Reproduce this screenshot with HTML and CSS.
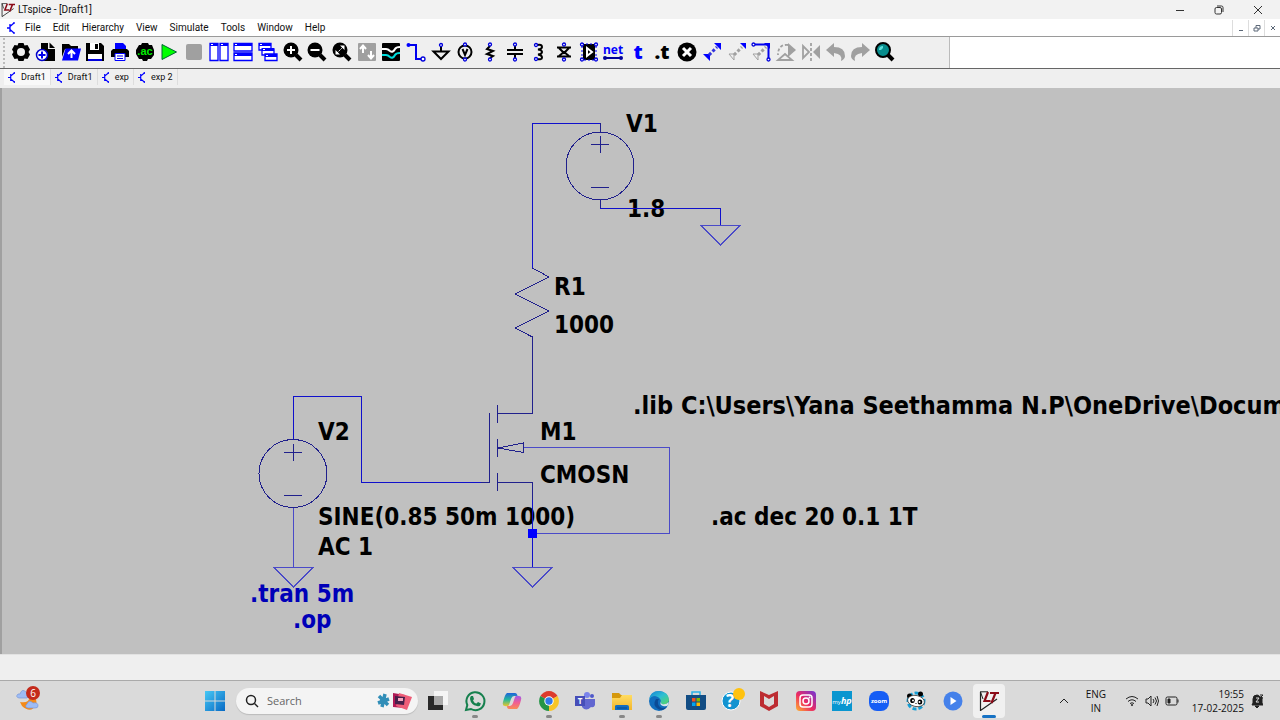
FILE: index.html
```html
<!DOCTYPE html>
<html lang="en">
<head>
<meta charset="utf-8">
<title>LTspice - [Draft1]</title>
<link rel="stylesheet" href="styles.css">
</head>
<body>
<svg class="defs" aria-hidden="true">
  <defs>
    <symbol id="doc" viewBox="0 0 10 12"><path d="M0 6H3M3 2V10M3 4.500L7 1M3 7.500L7 11M7 0V2M7 10V12" fill="none" stroke="#00f" stroke-width="1.300"/></symbol>
    <symbol id="lt" viewBox="0 0 20 20"><path d="M1.500 1V19.500L18 8" fill="none" stroke="#222" stroke-width="1.200"/><path d="M1 .8H9M1.500 1L4 8" fill="none" stroke="#222"/><path d="M9 1L5.500 10H11.500M11 2H20M16.500 2L12.500 12" fill="none" stroke="#8b0b18" stroke-width="2.200"/></symbol>
    <linearGradient id="gWin" x2="1" y2="1"><stop stop-color="#45c8f5"/><stop offset="1" stop-color="#0869c4"/></linearGradient>
    <linearGradient id="gIg" x1="0" y1="1" x2="1" y2="0"><stop stop-color="#ffb52e"/><stop offset=".45" stop-color="#ec2b62"/><stop offset="1" stop-color="#7036d8"/></linearGradient>
    <linearGradient id="gEdge" x2="1" y2="1"><stop stop-color="#1480d4"/><stop offset=".5" stop-color="#2ebfd3"/><stop offset="1" stop-color="#58d85c"/></linearGradient>
    <linearGradient id="gCopA" x2="0" y2="1"><stop stop-color="#1e63dc"/><stop offset=".5" stop-color="#25b99a"/><stop offset="1" stop-color="#f3c529"/></linearGradient>
    <linearGradient id="gCopB" x2="0" y2="1"><stop stop-color="#9f5bec"/><stop offset=".5" stop-color="#ef5c96"/><stop offset="1" stop-color="#fa8b54"/></linearGradient>
    <linearGradient id="gFold" x2="0" y2="1"><stop stop-color="#ffdc62"/><stop offset="1" stop-color="#f3b62b"/></linearGradient>
  </defs>
</svg>

<header class="titlebar">
  <svg class="app-icon"><use href="#lt"/></svg>
  <h1 class="title">LTspice - [Draft1]</h1>
  <div class="window-controls">
    <button aria-label="Minimize"><svg viewBox="0 0 10 10"><path d="M1 5.500H9"/></svg></button>
    <button aria-label="Restore"><svg viewBox="0 0 10 10"><rect x="1" y="2.500" width="6.500" height="6.500" rx="1.500"/><path d="M3 1H7.500Q9 1 9 2.500V7"/></svg></button>
    <button aria-label="Close"><svg viewBox="0 0 10 10"><path d="M1 1L9 9M9 1L1 9"/></svg></button>
  </div>
</header>

<nav class="menubar">
  <svg class="doc-icon"><use href="#doc"/></svg>
  <button>File</button><button>Edit</button><button>Hierarchy</button><button>View</button><button>Simulate</button><button>Tools</button><button>Window</button><button>Help</button>
  <div class="mdi">
    <button aria-label="Minimize document"><svg viewBox="0 0 8 8"><path d="M2 6.500H6"/></svg></button>
    <button aria-label="Restore document"><svg viewBox="0 0 8 8"><path d="M1 4H5V7H1ZM3 4V1.500H7V5H5"/></svg></button>
    <button aria-label="Close document"><svg viewBox="0 0 8 8"><path d="M2 2L6 6M6 2L2 6"/></svg></button>
  </div>
</nav>

<div class="toolbar">
  <div class="tools">
    <button aria-label="Settings"><svg viewBox="0 0 20 20"><path fill-rule="evenodd" d="M7.500 1H12.500L13.500 3.500L16.500 3L19 7.500L17.500 10L19 12.500L16.500 17L13.500 16.500L12.500 19H7.500L6.500 16.500L3.500 17L1 12.500L2.500 10L1 7.500L3.500 3L6.500 3.500ZM10 6A4 4 0 1 0 10 14A4 4 0 1 0 10 6"/></svg></button>
    <button aria-label="New schematic"><svg viewBox="0 0 20 20"><path d="M5 1H12V7H19V19H5Z"/><path d="M13.500 .5L19 6H13.500Z"/><circle cx="6" cy="13" r="5.500" fill="#fff" stroke="#00c" stroke-width="1.500"/><path class="b3" d="M6 9.500V16.500M2.500 13H9.500"/></svg></button>
    <button aria-label="Open"><svg viewBox="0 0 20 20"><path d="M1 2H8L10 4H17V7H4L1 15Z"/><path fill="#00f" d="M4.500 6.500H20L17 18.500H1Z"/><path class="w2" d="M10.500 16V9M7 12L10.500 8.500L14 12"/></svg></button>
    <button aria-label="Save"><svg viewBox="0 0 20 20"><path d="M1 1H16L19 4V19H1Z"/><path fill="#fff" d="M5 1H14V8H5ZM3 12H17V19H3Z"/><path d="M10 2H13V7H10Z"/><path fill="#00d" d="M3 17H17V19H3Z"/></svg></button>
    <button aria-label="Print"><svg viewBox="0 0 20 20"><path fill="#00f" d="M5 1H13L16 4V8H5Z"/><path d="M3 7H17L19 9V15H1V9Z"/><path fill="#fff" stroke="#00f" d="M5 11.500H15V18.500H5Z"/><path class="b" d="M7 14H13M7 16.500H13"/></svg></button>
    <button aria-label="AC analysis"><svg viewBox="0 0 20 20"><path d="M7 1H13L14 3H17L19 8V13L16 17H13L12 19H8L7 17H4L1 12V8L4 3H6Z"/><text class="ac" x="10" y="13" text-anchor="middle">.ac</text></svg></button>
    <button aria-label="Run"><svg viewBox="0 0 20 20"><path fill="#0f0" stroke="#063" d="M3 2.500L17.500 10L3 17.500Z"/></svg></button>
    <button aria-label="Stop" disabled><svg viewBox="0 0 20 20"><rect x="2" y="2" width="16" height="16" rx="2" fill="#a0a0a0"/></svg></button>
    <button aria-label="Tile vertically"><svg viewBox="0 0 20 20"><path class="wb" d="M1 1.500H9V18.500H1ZM11 1.500H19V18.500H11Z"/><path fill="#00f" d="M1 1H9V4H1ZM11 1H19V4H11Z"/><path fill="#fff" d="M2 2H4V3H2ZM12 2H14V3H12Z"/></svg></button>
    <button aria-label="Tile horizontally"><svg viewBox="0 0 20 20"><path class="wb" d="M1 1.500H19V9H1ZM1 11H19V18.500H1Z"/><path fill="#00f" d="M1 1H19V4H1ZM1 11H19V14H1Z"/><path fill="#fff" d="M2 2H4V3H2ZM2 12H4V13H2Z"/></svg></button>
    <button aria-label="Cascade"><svg viewBox="0 0 20 20"><path class="wb" d="M1 1.500H13V8H1Z"/><path class="wb" d="M4 7H16V13H4Z"/><path class="wb" d="M7 12H19V18.500H7Z"/><path fill="#00f" d="M1 1H13V4H1ZM4 6H16V9H4ZM7 12H19V15H7Z"/><path fill="#fff" d="M2 2H4V3H2ZM5 7H7V8H5ZM8 13H10V14H8Z"/></svg></button>
    <button aria-label="Zoom in"><svg viewBox="0 0 20 20"><circle cx="8" cy="8" r="7.500"/><path class="k4" d="M13 13L18 18"/><path class="w2" d="M4 8H12M8 4V12"/></svg></button>
    <button aria-label="Zoom out"><svg viewBox="0 0 20 20"><circle cx="8" cy="8" r="7.500"/><path class="k4" d="M13 13L18 18"/><path class="w2" d="M3.500 8H12.500"/></svg></button>
    <button aria-label="Zoom to fit"><svg viewBox="0 0 20 20"><circle cx="8" cy="8" r="7.500"/><path class="k4" d="M13 13L18 18"/><path fill="#fff" d="M8 3.500H12.500V8ZM3.500 8L8 12.500H3.500Z"/><path stroke="#fff" stroke-dasharray="2 1" d="M5 11L11 5"/></svg></button>
    <button aria-label="Autorange" disabled><svg viewBox="0 0 20 20"><rect x="1" y="1" width="18" height="18" rx="1" fill="#a0a0a0"/><path class="w2" d="M6 11V4M3 7L6 3.500L9 7M14 9V16M11 13L14 16.500L17 13"/></svg></button>
    <button aria-label="Waveforms"><svg viewBox="0 0 20 20"><rect x="1" y="1" width="18" height="18" rx="1"/><path class="w2" d="M1 7H5Q7 7 9 9Q12 11 14 7Q15 5 19 5"/><path fill="none" stroke="#0dd" stroke-width="2" d="M1 13H5Q7 13 9 15Q12 17 14 13Q15 11 19 11"/></svg></button>
    <button aria-label="Wire"><svg viewBox="0 0 20 20"><path class="b" stroke-width="2" d="M2 3H10V17H16"/><circle cx="2.500" cy="3" r="2" fill="#00f"/><circle class="pin" cx="17" cy="17" r="2"/></svg></button>
    <button aria-label="Ground"><svg viewBox="0 0 20 20"><path class="k2" d="M10 5V9M2.500 9.500H17.500L10 17Z"/><circle class="pin" cx="10" cy="3" r="1.500"/></svg></button>
    <button aria-label="Voltage source"><svg viewBox="0 0 20 20"><circle class="k2" cx="10" cy="10" r="6.500"/><path class="k2" d="M7.500 7L10 13L12.500 7"/><circle class="pin" cx="10" cy="2.500" r="1.500"/><circle class="pin" cx="10" cy="17.500" r="1.500"/></svg></button>
    <button aria-label="Resistor"><svg viewBox="0 0 20 20"><path class="k2" d="M10 4L7 7L13 9L7 12L13 14L10 16"/><circle class="pin" cx="10" cy="2.500" r="1.500"/><circle class="pin" cx="10" cy="17.500" r="1.500"/></svg></button>
    <button aria-label="Capacitor"><svg viewBox="0 0 20 20"><path class="k2" d="M2 8H18M2 12H18M10 4V8M10 12V16"/><circle class="pin" cx="10" cy="2.500" r="1.500"/><circle class="pin" cx="10" cy="17.500" r="1.500"/></svg></button>
    <button aria-label="Inductor"><svg viewBox="0 0 20 20"><path class="k2" d="M8 3Q13 2 13 5Q13 7 9 7.500Q13 8 13 10Q13 12 9 12.500Q13 13 13 15.500Q13 18 8 17"/><circle class="pin" cx="7" cy="3" r="1.500"/><circle class="pin" cx="7" cy="17" r="1.500"/></svg></button>
    <button aria-label="Diode"><svg viewBox="0 0 20 20"><path class="k2" d="M3 5.500H17M5 6L10 11L15 6M3 14.500H17M5 14L10 10L15 14"/><circle class="pin" cx="10" cy="2.500" r="1.500"/><circle class="pin" cx="10" cy="17.500" r="1.500"/></svg></button>
    <button aria-label="Component"><svg viewBox="0 0 20 20"><rect x="4" y="2" width="12" height="16"/><path class="w2" d="M8 6L13 10L8 14Z"/><path class="b" stroke-dasharray="2 2" d="M3 2H17V18H3Z"/><g class="pin"><circle cx="3" cy="2.500" r="1.500"/><circle cx="17" cy="2.500" r="1.500"/><circle cx="3" cy="17.500" r="1.500"/><circle cx="17" cy="17.500" r="1.500"/></g></svg></button>
    <button aria-label="Net name"><svg viewBox="0 0 20 20"><text class="net" x="10" y="12" text-anchor="middle">net</text><g fill="#009"><path stroke="#009" stroke-width="2" d="M2 16H18"/><circle cx="2" cy="16" r="2"/><circle cx="18" cy="16" r="2"/></g></svg></button>
    <button aria-label="Text"><svg viewBox="0 0 20 20"><text class="tt blue" x="10" y="17" text-anchor="middle">t</text></svg></button>
    <button aria-label="SPICE directive"><svg viewBox="0 0 20 20"><text class="tt" x="9" y="17" text-anchor="middle">.t</text></svg></button>
    <button aria-label="Delete"><svg viewBox="0 0 20 20"><circle cx="10" cy="10" r="9.500"/><path class="w3" d="M6 6L14 14M14 6L6 14"/></svg></button>
    <button aria-label="Move"><svg viewBox="0 0 20 20"><path fill="#00f" d="M12 1H19V8ZM1 12H8V19Z"/><path class="dash blue-line" d="M7 13L15 5"/></svg></button>
    <button aria-label="Copy"><svg viewBox="0 0 20 20"><path fill="#00f" d="M13 1H19V7Z"/><path class="g" d="M2 12H7V18Z"/><path class="g dash" d="M7 13L15 5"/></svg></button>
    <button aria-label="Drag"><svg viewBox="0 0 20 20"><path fill="#00f" d="M13 1H19V7Z"/><path class="b" stroke-width="2" d="M4 2.500H17.500V16"/><path class="g" d="M2 12H7V18Z"/><path class="g dash" d="M7 13L15 5"/><circle class="pin" cx="2.500" cy="2.500" r="1.500"/><circle class="pin" cx="17.500" cy="17.500" r="1.500"/></svg></button>
    <button aria-label="Rotate" disabled><svg viewBox="0 0 20 20"><path fill="#a0a0a0" d="M12 1L20 8L12 15Z"/><path class="g2" stroke-dasharray="3 2" d="M12 3Q2 2 2 13"/><path class="g2" d="M2 18H16L9 12Z"/></svg></button>
    <button aria-label="Mirror" disabled><svg viewBox="0 0 20 20"><path fill="#a0a0a0" d="M19 3V17L12 10Z"/><path class="g2" d="M2 4V16L8 10Z"/><path class="g2" stroke-dasharray="3 2" d="M10 1V19"/></svg></button>
    <button aria-label="Undo" disabled><svg viewBox="0 0 20 20"><path fill="#a0a0a0" d="M0 8L8 1V5Q19 5 19 14Q19 17 15 19Q17 12 8 11V15Z"/></svg></button>
    <button aria-label="Redo" disabled><svg viewBox="0 0 20 20"><path fill="#a0a0a0" d="M20 8L12 1V5Q1 5 1 14Q1 17 5 19Q3 12 12 11V15Z"/></svg></button>
    <button aria-label="Find"><svg viewBox="0 0 20 20"><path class="k4" d="M13 13L18 18"/><circle cx="8" cy="8" r="7" fill="#078c8c" stroke="#000" stroke-width="2"/><path fill="#5de0dc" d="M4 8Q4 4 8 4V6L6 8Z"/></svg></button>
  </div>
</div>

<nav class="tabs">
  <button class="tab active"><svg class="doc-icon"><use href="#doc"/></svg>Draft1</button>
  <button class="tab"><svg class="doc-icon"><use href="#doc"/></svg>Draft1</button>
  <button class="tab"><svg class="doc-icon"><use href="#doc"/></svg>exp</button>
  <button class="tab"><svg class="doc-icon"><use href="#doc"/></svg>exp 2</button>
</nav>

<main class="canvas">
  <svg class="schematic" role="img" aria-label="Schematic">
    <g transform="translate(-2 -88)">
      <g class="label">
        <text x="626" y="132">V1</text><text x="627" y="217">1.8</text>
        <text x="554" y="295">R1</text><text x="554" y="333">1000</text>
        <text x="318" y="440">V2</text><text x="540" y="440">M1</text><text x="540" y="483">CMOSN</text>
        <text x="318" y="525">SINE(0.85 50m 1000)</text><text x="318" y="555">AC 1</text>
        <text class="library" x="633" y="414">.lib C:\Users\Yana Seethamma N.P\OneDrive\Docum</text>
        <text x="711" y="525">.ac dec 20 0.1 1T</text>
        <text class="probe" x="250" y="602">.tran 5m</text><text class="probe" x="293" y="628">.op</text>
      </g>
      <g class="wire">
        <path d="M532.500 268V123.500H600.500V131M600.500 200V208.500H720.500V225M293.500 439V396.500H361.500V482.500H489M532.500 388V413M532.500 483V568"/>
        <path class="thin" d="M532.500 533.500H669.500V447.500H524M293.500 508V568M701 225.500H740L720.500 245ZM274 567.500H313L293.500 587ZM513 567.500H552L532.500 587Z"/>
      </g>
      <g class="part">
        <circle cx="600" cy="166" r="34"/><circle cx="293" cy="473.500" r="34"/>
        <path d="M600.500 123V132M600.500 200V208M591 144.500H609M600.500 136V153M591 187.500H609M284 452.500H302M293.500 444V461M284 495.500H302"/>
        <path d="M532.500 268L549 277L515 294L549 311L515 328L532.500 337V413.500H498M489.500 413V482.500H481M497.500 405V423M497.500 439V457M497.500 473V491M498 482.500H532.500V500M498 448L523.500 443V452.500Z"/>
      </g>
      <rect x="528" y="529" width="9" height="9" fill="#00f"/>
    </g>
  </svg>
</main>

<div class="statusbar"></div>

<footer class="taskbar">
  <div class="widgets">
    <button aria-label="Weather"><svg viewBox="0 0 26 26"><path fill="#f58a18" d="M4 16Q13 18 15 9Q22 12 20 19Q15 28 6 20Z"/><path fill="#9ebcf5" stroke="#7898d8" stroke-width=".7" d="M3 12Q-1 11 2 8Q3 8 4 8Q6 2 10 6Q15 9 11 12ZM12 22Q8 21 11 18Q13 13 17 17Q22 16 22 20Q22 22 19 22Z"/><circle cx="17" cy="7" r="7" fill="#c42b1c"/><text class="badge" x="17" y="11" text-anchor="middle">6</text></svg></button>
  </div>
  <button class="start" aria-label="Start"><svg viewBox="0 0 20 20"><path fill="url(#gWin)" d="M0 0H9.500V9.500H0ZM10.500 0H20V9.500H10.500ZM0 10.500H9.500V20H0ZM10.500 10.500H20V20H10.500Z"/></svg></button>
  <div class="search">
    <svg class="lens" viewBox="0 0 14 14"><circle cx="6" cy="6" r="4.500"/><path d="M9.500 9.500L13 13"/></svg>
    <input type="text" placeholder="Search" aria-label="Search">
    <svg class="promo" viewBox="0 0 36 20"><path fill="none" stroke="#318eb8" stroke-width="3.500" d="M3 5L12 14M9 3L6 16M2 12L13 8"/><circle cx="7.500" cy="9.500" r="3.500" fill="#318eb8"/><path fill="#b01955" d="M17 2L29 4L28 17L17 16Z"/><path fill="#ee5d78" d="M23 2L36 6L31 19L20 15Z"/><path fill="#46204b" d="M19 5L29 6L28 14L19 13Z"/><path fill="#f7a6bd" d="M22 7H27V10H22Z"/></svg>
  </div>
  <div class="apps">
    <button aria-label="Task view"><svg viewBox="0 0 20 20"><path fill="#292929" d="M0 5H15V19H0Z"/><path fill="#f5f5f5" d="M6 0H20V14H6Z"/><path fill="#aaa" d="M6 5H15V14H6Z"/></svg></button>
    <button class="running" aria-label="WhatsApp"><svg viewBox="0 0 20 20"><path fill="none" stroke="#16804e" stroke-width="2" d="M1 19L2.300 14A9 9 0 1 1 6 18Z"/><path fill="#16804e" d="M6 5L8 5L9 8L8 9.500Q9 12 11.500 12.500L13 11L16 12.500Q15 16 12 15Q6 14 5 8Q5 6 6 5Z"/></svg></button>
    <button aria-label="Copilot"><svg viewBox="0 0 20 20"><path fill="url(#gCopA)" d="M5 2H13Q15 2 15.500 5H12Q10 5 9 8L7 14Q6 16 3 15Q0 15 1 11Q3 3 5 2Z"/><path fill="url(#gCopB)" d="M15 18H7Q5 18 5 15H8Q10 15 11 12L13 6Q14 4 17 5Q20 5 19 9Q17 17 15 18Z"/></svg></button>
    <button class="running" aria-label="Chrome"><svg viewBox="0 0 20 20"><path fill="#dd3b2c" d="M10 10L1.400 5A10 10 0 0 1 18.600 5Z"/><path fill="#f8c525" d="M10 10L18.600 5A10 10 0 0 1 10 20Z"/><path fill="#249547" d="M10 10V20A10 10 0 0 1 1.400 5Z"/><circle cx="10" cy="10" r="4.700" fill="#fff"/><circle cx="10" cy="10" r="3.700" fill="#3179e8"/></svg></button>
    <button aria-label="Teams"><svg viewBox="0 0 20 20"><circle cx="12" cy="4" r="3" fill="#7b83eb"/><circle cx="17" cy="5" r="2" fill="#5059c9"/><path fill="#6267d0" d="M7 8H20V14Q19 17 16 16Q11 21 7 16Z"/><path fill="#464eb8" d="M0 5H10V15H0Z"/><text class="team" x="5" y="13" text-anchor="middle">T</text></svg></button>
    <button class="running" aria-label="File Explorer"><svg viewBox="0 0 20 20"><path fill="#d5980d" d="M0 2H7L9 4H20V10H0Z"/><path fill="url(#gFold)" d="M0 7H8L10 4H20V19H0Z"/><path fill="#126dc0" d="M3 19V15Q3 14 5 14H15Q17 14 17 16V19Z"/><path stroke="#094b8c" d="M5 17H15"/></svg></button>
    <button class="running" aria-label="Edge"><svg viewBox="0 0 20 20"><circle cx="10" cy="10" r="10" fill="#116dbd"/><path fill="url(#gEdge)" d="M0 9Q1 0 10 0Q20 1 20 9Q19 14 13 13Q11 12 12 10Q11 6 6 5Q2 5 0 9Z"/><path fill="#d7e6e6" d="M12 10Q10 14 14 15Q17 16 19.500 14L19.500 11Q17 14 13 13Q11 12 12 10Z"/><path fill="#0b4b96" d="M7 8Q3 14 9 18Q14 21 18 16Q11 19 9 13Q8 10 10 8Z"/></svg></button>
    <button aria-label="Microsoft Store"><svg viewBox="0 0 20 20"><path fill="none" stroke="#2ab1e8" stroke-width="1.500" d="M6 5V1H14V5"/><path fill="#124d84" d="M0 4H20V17Q20 19 18 19H2Q0 19 0 17Z"/><path fill="#f25022" d="M6 7H9.500V10.500H6Z"/><path fill="#7fba00" d="M10.500 7H14V10.500H10.500Z"/><path fill="#00a4ef" d="M6 11.500H9.500V15H6Z"/><path fill="#ffb900" d="M10.500 11.500H14V15H10.500Z"/></svg></button>
    <button aria-label="Get Help"><svg viewBox="0 0 20 20"><circle cx="9" cy="10" r="9" fill="#1393d0" stroke="#fff"/><text class="help" x="8" y="16" text-anchor="middle">?</text><circle cx="17" cy="3" r="6" fill="#ffc20e"/></svg></button>
    <button aria-label="McAfee"><svg viewBox="0 0 20 20"><path fill="#bd2c32" fill-rule="evenodd" d="M1 0L10 4L19 0V15L10 20L1 15ZM5 5V13L10 16L15 13V5L10 8Z"/></svg></button>
    <button aria-label="Instagram"><svg viewBox="0 0 20 20"><rect width="20" height="20" rx="4" fill="url(#gIg)"/><rect x="4" y="4" width="12" height="12" rx="3" fill="none" stroke="#fff" stroke-width="1.500"/><circle cx="10" cy="10" r="3" fill="none" stroke="#fff" stroke-width="1.500"/><circle cx="13.500" cy="6.500" r="1" fill="#fff"/></svg></button>
    <button aria-label="myHP"><svg viewBox="0 0 20 20"><path fill="#0996d0" d="M0 0H20V20H0Z"/><text class="hp" x="10" y="13" text-anchor="middle">my<tspan class="hp-logo">hp</tspan></text></svg></button>
    <button aria-label="Zoom"><svg viewBox="0 0 20 20"><rect width="20" height="20" rx="8" fill="#155df5"/><text class="zoom" x="10" y="12" text-anchor="middle">zoom</text></svg></button>
    <button aria-label="Panda"><svg viewBox="0 0 20 20"><circle cx="10" cy="10" r="8" fill="none" stroke="#169ed5" stroke-width="3" stroke-dasharray="4 2"/><circle cx="3.500" cy="5" r="2.500"/><circle cx="14.500" cy="3" r="2.500"/><ellipse cx="10" cy="10" rx="8.500" ry="5.500" fill="#fff" stroke="#222" stroke-width=".7" transform="rotate(12 10 10)"/><ellipse cx="6.500" cy="9.500" rx="2.300" ry="2.600"/><ellipse cx="14" cy="11" rx="2.300" ry="2.600"/><circle cx="7" cy="9.500" r="1" fill="#fff"/><circle cx="13.500" cy="11" r="1" fill="#fff"/><path d="M9 12H11L10 13Z"/></svg></button>
    <button aria-label="Media player"><svg viewBox="0 0 20 20"><circle cx="10" cy="10" r="9.500" fill="#4581ea"/><path fill="#fff" d="M7.500 6L13.500 10L7.500 14Z"/></svg></button>
    <button class="current" aria-label="LTspice"><svg><use href="#lt"/></svg></button>
  </div>
  <div class="tray">
    <button class="chevron" aria-label="Show hidden icons"><svg viewBox="0 0 10 10"><path d="M1 7L5 3L9 7"/></svg></button>
    <button class="lang">ENG<br>IN</button>
    <button class="status" aria-label="Network, volume and battery">
      <svg viewBox="0 0 14 14"><path d="M1 5Q7 0 13 5M3 7.500Q7 4 11 7.500M5 9.500Q7 8 9 9.500"/><circle cx="7" cy="11" r=".7"/></svg>
      <svg viewBox="0 0 14 14"><path d="M1 5H3L6 2V12L3 9H1ZM8 5Q10 7 8 9M10 3.500Q13 7 10 10.500M12 2Q15 7 12 12"/></svg>
      <svg viewBox="0 0 14 14"><rect x="1" y="3" width="11" height="8" rx="1.500"/><path d="M13 5.500V8.500"/><path fill="#222" d="M3 5H5V9H3Z"/></svg>
    </button>
    <button class="clock">19:55<br>17-02-2025</button>
    <button class="bell" aria-label="Notifications"><svg viewBox="0 0 12 14"><path fill="#202020" d="M1 11L2 9V5Q2 1 6 1Q8 1 9 3L11 3V9L12 11ZM4 12H8L6 14Z"/><path d="M5 4H8L5 8H8" stroke="#ddd"/><path d="M9 1H12L9 4H12"/></svg></button>
  </div>
</footer>
</body>
</html>
```

FILE: styles.css
```css
* { box-sizing: border-box; }

body {
  display: flex;
  flex-direction: column;
  height: 100vh;
  margin: 0;
  overflow: hidden;
  background: #efefef;
  color: #111;
  font: 10px/14px "Open Sans", "Noto Sans", sans-serif;
}

button {
  padding: 0;
  border: 0;
  background: none;
  color: inherit;
  font: inherit;
}

svg { display: block; flex: none; }
.defs { position: absolute; width: 0; height: 0; }

/* Window frame */
.titlebar, .menubar, .tabs { font-family: Roboto, "Open Sans", sans-serif; }
.titlebar {
  display: flex;
  align-items: center;
  height: 19px;
  flex: none;
  padding: 0 3px 0 1px;
  background: #f2f2f2;
}
.app-icon { width: 14px; height: 14px; }
.title { margin: 0 0 0 3px; font-size: 10px; font-weight: 400; }
.window-controls { display: flex; margin-left: auto; }
.window-controls button { display: grid; place-items: center; width: 39px; height: 19px; }
.window-controls svg { width: 10px; height: 10px; fill: none; stroke: #333; }

.menubar {
  display: flex;
  align-items: center;
  height: 18px;
  flex: none;
  padding-left: 7px;
  border-bottom: 1px solid #9a9a9a;
  background: #fff;
}
.menubar > button { padding: 0 6px; }
.doc-icon { width: 10px; height: 12px; }
.menubar > .doc-icon { margin-right: 2px; }
.mdi { display: flex; margin-left: auto; }
.mdi button {
  display: grid;
  place-items: center;
  width: 16px;
  height: 16px;
  border-left: 1px solid #ddd;
}
.mdi svg { width: 8px; height: 8px; fill: none; stroke: #5c6878; }

/* Toolbar */
.toolbar {
  height: 32px;
  flex: none;
  border-bottom: 1px solid #666;
  background: #fff;
}
.tools {
  display: flex;
  align-items: center;
  width: 950px;
  height: 31px;
  padding: 0 52px 2px 9px;
  border-right: 1px solid #bbb;
  background: #efefef;
  background-image: radial-gradient(circle at 4px 2px, #bbb 1px, transparent 1px);
  background-repeat: repeat-y;
  background-size: 8px 4px;
}
.tools button { display: grid; place-items: center; flex: 1 1 0; min-width: 0; }
.tools svg { width: 20px; height: 20px; overflow: visible; }
.k2 { fill: none; stroke: #000; stroke-width: 2; }
.k4 { fill: none; stroke: #000; stroke-width: 4; }
.w2 { fill: none; stroke: #fff; stroke-width: 2; }
.w3 { fill: none; stroke: #fff; stroke-width: 3; }
.b { fill: none; stroke: #00e; }
.b3 { fill: none; stroke: #00e; stroke-width: 2; }
.wb { fill: #fff; stroke: #00f; stroke-width: 1.3; }
.g { fill: none; stroke: #a0a0a0; }
.g2 { fill: none; stroke: #a0a0a0; stroke-width: 1.8; }
.pin { fill: #fff; stroke: #00d; stroke-width: 1.3; }
.dash { stroke-width: 3; stroke-dasharray: 3 2; }
.blue-line { fill: none; stroke: #33d; }
.ac { fill: #0e0; font: 700 11px "Liberation Sans", sans-serif; }
.net { fill: #00f; font: 700 12px "Open Sans", sans-serif; }
.tt { font: 800 20px "Open Sans", sans-serif; }
.blue { fill: #00f; }

/* Document tabs */
.tabs {
  display: flex;
  height: 19px;
  flex: none;
  padding: 0 0 3px 4px;
  background: #efefef;
}
.tab {
  display: flex;
  align-items: center;
  gap: 4px;
  padding: 0 4px;
  border-right: 1px solid #ddd;
  font-size: 9px;
}
.tab.active { background: #f8f8f8; }
.tab .doc-icon { width: 9px; height: 11px; }

/* Schematic */
.canvas {
  flex: 1;
  min-height: 0;
  border-left: 2px solid #a0a0a0;
  background: #c0c0c0;
}
.schematic { width: 100%; height: 100%; }
.label { font: 700 24px "DejaVu Sans Condensed", "DejaVu Sans", sans-serif; fill: #000; }
.library { font-size: 25px; }
.probe { fill: #0000b8; }
.wire, .part { fill: none; stroke-width: 1; shape-rendering: crispEdges; }
.wire { stroke: #1010cc; }
.thin { stroke: #4a4ac8; }
.part { stroke: #20208c; }

.statusbar { height: 26px; flex: none; background: #efefef; border-top: 1px solid #e2e2e2; }

/* Taskbar */
.taskbar {
  display: flex;
  align-items: center;
  height: 40px;
  flex: none;
  border-top: 1px solid #aaa;
  background: #dadada;
}
.widgets { width: 196px; padding-left: 16px; }
.widgets svg { width: 26px; height: 26px; }
.badge { fill: #fff; font: 10px "Open Sans", sans-serif; }
.start { display: grid; place-items: center; width: 38px; }
.start svg { width: 20px; height: 20px; }
.search {
  display: flex;
  align-items: center;
  gap: 8px;
  width: 182px;
  height: 26px;
  margin: 0 2px;
  padding: 0 6px 0 9px;
  border-radius: 13px;
  background: #f4f4f4;
  box-shadow: 0 1px 1px #bbb;
}
.lens { width: 14px; height: 14px; fill: none; stroke: #222; stroke-width: 1.5; }
.search input {
  flex: 1;
  min-width: 0;
  padding: 0;
  border: 0;
  outline: 0;
  background: none;
  color: #555;
  font: 11px "Open Sans", sans-serif;
}
.search input::placeholder { color: #666; opacity: 1; }
.promo { width: 36px; height: 20px; }
.apps { display: flex; width: 587px; }
.apps button {
  position: relative;
  display: grid;
  place-items: center;
  flex: 1 1 0;
  height: 34px;
}
.apps svg { width: 20px; height: 20px; overflow: visible; }
.running::after, .current::after {
  content: "";
  position: absolute;
  bottom: 0;
  width: 6px;
  height: 3px;
  border-radius: 2px;
  background: #888;
}
.apps .current { flex: 0 0 32px; margin: 0 2px; border-radius: 4px; background: #f0f0f0; }
.current::after { width: 14px; background: #1672c4; }
.team { fill: #fff; font: 700 8px "Open Sans", sans-serif; }
.help { fill: #fff; font: 700 17px "Open Sans", sans-serif; }
.hp { fill: #fff; font: 6px "Open Sans", sans-serif; }
.hp-logo { font: italic 700 9px "Open Sans", sans-serif; }
.zoom { fill: #fff; font: 700 6px "Open Sans", sans-serif; }

.tray { display: flex; align-items: center; margin-left: auto; padding-right: 17px; }
.tray svg { fill: none; stroke: #222; }
.chevron svg { width: 10px; height: 10px; }
.lang { width: 26px; margin: 0 16px 0 14px; text-align: center; }
.status { display: flex; gap: 6px; }
.status svg { width: 14px; height: 14px; }
.clock { margin: 0 7px 0 13px; text-align: right; }
.bell svg { width: 12px; height: 14px; stroke-width: 1; }
```
